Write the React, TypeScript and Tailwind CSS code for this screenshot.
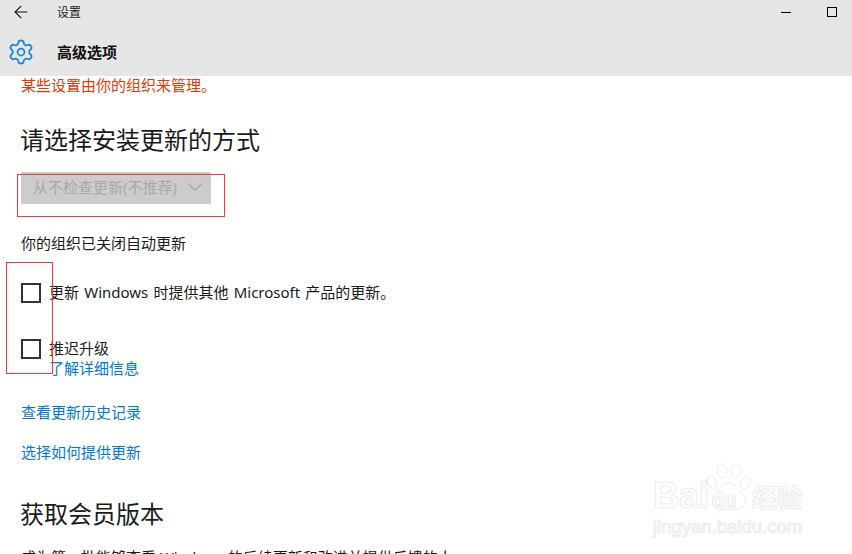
import { ArrowLeft, ChevronDown, Settings } from "lucide-react";

const font = "font-['Noto_Sans','Noto_Sans_CJK_SC',sans-serif]";

function CheckRow({ label, link }: { label: string; link?: string }) {
  return (
    <div className="flex gap-2">
      <div className="w-5 h-5 mt-[1px] shrink-0 border-2 border-[#333333]" />
      <div className="-mt-[1px]">
        <div className="text-[15px] leading-[22px] text-[#1a1a1a] [word-spacing:1.3px]">{label}</div>
        {link && <div className="mt-[1px] text-[15px] leading-[17px] text-[#0078d7]">{link}</div>}
      </div>
    </div>
  );
}

function Watermark() {
  const outline = "text-transparent [-webkit-text-stroke:1px_#ececec] font-['Liberation_Sans','Noto_Sans_CJK_SC',sans-serif]";
  return (
    <div className="absolute left-[652px] top-[462px] w-[156px] h-[74px]">
      <span className={`absolute left-[1px] top-[14px] text-[36px] leading-[40px] font-bold ${outline}`}>Bai</span>
      <svg className="absolute left-[54px] top-[0px]" width="46" height="52" viewBox="0 0 46 52" fill="none" stroke="#ececec" strokeWidth="1">
        <ellipse cx="16" cy="9" rx="5" ry="7" />
        <ellipse cx="30" cy="9" rx="5" ry="7" />
        <ellipse cx="6" cy="20" rx="4.5" ry="6.5" transform="rotate(-20 6 20)" />
        <ellipse cx="39" cy="21" rx="4.5" ry="6.5" transform="rotate(20 39 21)" />
        <path d="M22 21c6 0 9 5 13 9 5 5 6 10 3 14-3 4-8 4-15 3-7 1-12 1-15-3-3-4-2-9 3-14 4-4 5-9 11-9z" />
      </svg>
      <span className={`absolute left-[60px] top-[26px] text-[20px] leading-[24px] font-bold ${outline}`}>du</span>
      <span className={`absolute left-[100px] top-[21px] text-[25px] leading-[30px] font-bold ${outline}`}>经验</span>
      <span className={`absolute left-[1px] top-[53px] text-[18.5px] leading-[24px] ${outline}`}>jingyan.baidu.com</span>
    </div>
  );
}

export default function App() {
  return (
    <div className={`relative w-[852px] h-[554px] overflow-hidden bg-white ${font}`}>
      <div className="h-[76px] bg-[#e6e6e6]">
        <div className="flex items-center h-[24px]">
          <ArrowLeft className="ml-[11px] w-5 h-5 text-[#111111]" strokeWidth={1.3} />
          <span className="ml-[26px] mt-[1px] text-[12px] text-[#222222]">设置</span>
          <div className="ml-auto mr-[15px] flex items-center gap-[36px]">
            <div className="w-[10px] h-[1px] bg-black" />
            <div className="w-[10px] h-[10px] border border-black" />
          </div>
        </div>
        <div className="flex items-center h-[56px]">
          <Settings className="ml-[7px] w-7 h-7 text-[#1a86d9]" strokeWidth={1.5} />
          <span className="ml-[22px] text-[15px] font-semibold text-[#111111]">高级选项</span>
        </div>
      </div>

      <div className="pl-[21px]">
        <div className="-mt-[1px] text-[15px] leading-[20px] text-[#e03a0b]">某些设置由你的组织来管理。</div>
        <h1 className="-ml-[1px] mt-[28px] text-[24px] leading-[34px] text-[#1a1a1a]">请选择安装更新的方式</h1>
        <div className="mt-[15px] w-[190px] h-[32px] bg-[#cccccc] flex items-center pl-[12px] pb-[2px] text-[15px] text-[#a8a8a8]">
          从不检查更新(不推荐)
          <ChevronDown className="ml-[5px] w-[26px] h-[26px]" strokeWidth={1} />
        </div>
        <div className="mt-[28px] text-[15px] leading-[22px] text-[#1a1a1a]">你的组织已关闭自动更新</div>
        <div className="mt-[28px]">
          <CheckRow label="更新 Windows 时提供其他 Microsoft 产品的更新。" />
        </div>
        <div className="mt-[35px]">
          <CheckRow label="推迟升级" link="了解详细信息" />
        </div>
        <div className="mt-[24px] text-[15px] leading-[22px] text-[#0078d7]">查看更新历史记录</div>
        <div className="mt-[18px] text-[15px] leading-[22px] text-[#0078d7]">选择如何提供更新</div>
        <h2 className="-ml-[1px] mt-[34px] text-[24px] leading-[34px] text-[#1a1a1a]">获取会员版本</h2>
        <div className="mt-[15px] text-[15px] leading-[22px] text-[#1a1a1a] whitespace-nowrap">成为第一批能够查看 Windows 的后续更新和改进并提供反馈的人</div>
      </div>

      {/* annotation boxes on top of the shot */}
      <div className="absolute left-[17px] top-[174px] w-[208px] h-[43px] border border-[#f03a3a]" />
      <div className="absolute left-[6px] top-[262px] w-[47px] h-[112px] border border-[#f03a3a]" />
      <Watermark />
    </div>
  );
}
